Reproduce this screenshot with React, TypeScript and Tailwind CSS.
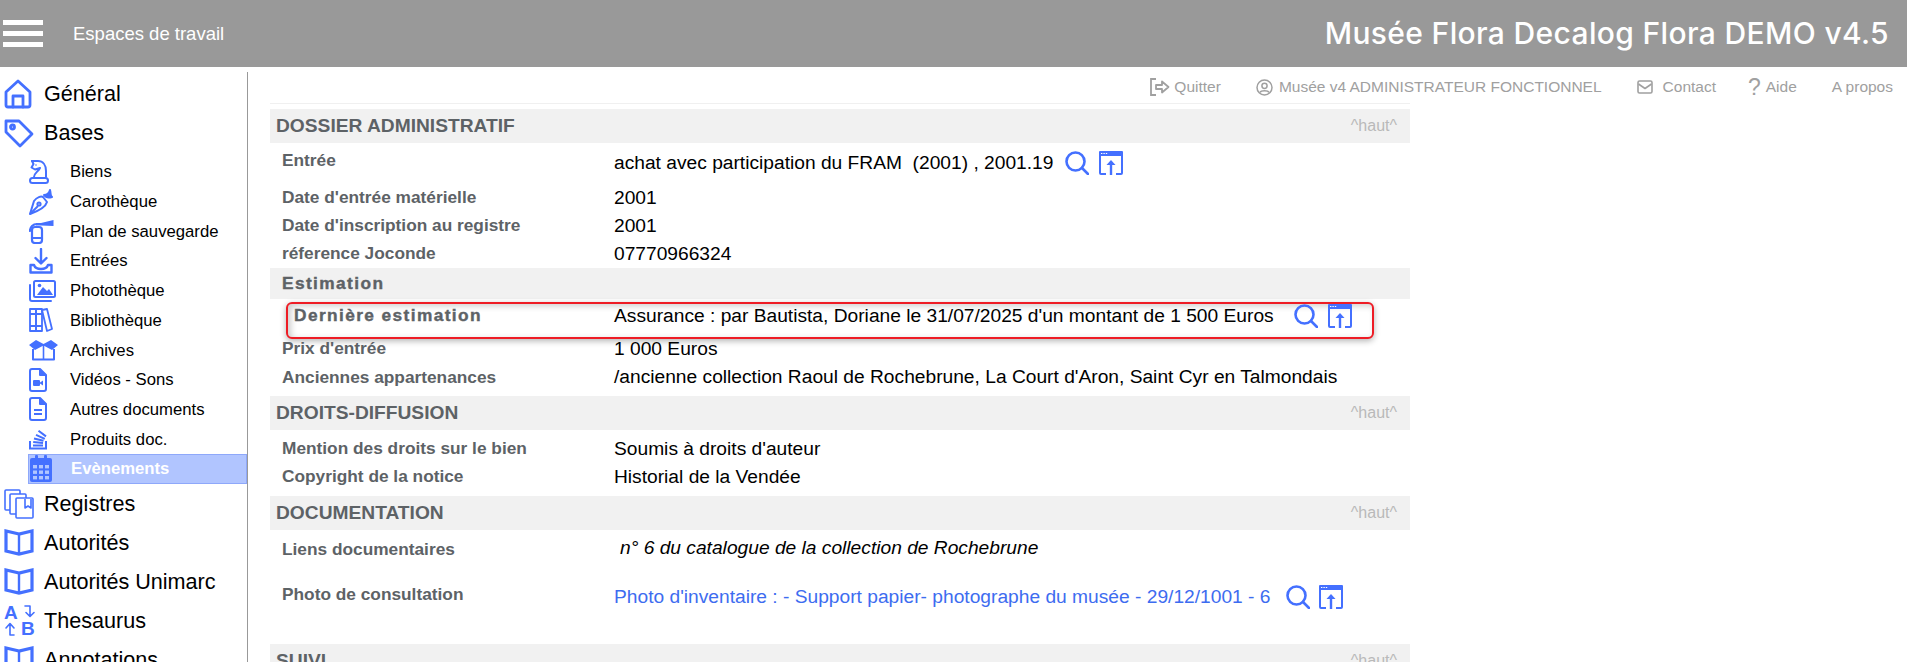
import type { ReactNode } from 'react'

const arial = 'font-["Liberation_Sans",Arial,sans-serif]'

function HomeIcon() {
  return (
    <svg width="28" height="30" viewBox="0 0 28 30" fill="none" stroke="#4470ff" strokeWidth="2.8" strokeLinejoin="round" strokeLinecap="round">
      <path d="M2 13 L14 2 L26 13 V26 a2 2 0 0 1 -2 2 H4 a2 2 0 0 1 -2 -2 Z" />
      <path d="M9 28 V17 H19 V28" />
    </svg>
  )
}

function TagIcon() {
  return (
    <svg width="30" height="30" viewBox="0 0 30 30" fill="none" stroke="#4470ff" strokeWidth="2.8" strokeLinejoin="round">
      <path d="M2 3 L15 3 L28 16 L16 28 L2 14 Z" />
      <circle cx="8.5" cy="9" r="2" />
    </svg>
  )
}

function KnightIcon() {
  return (
    <svg width="20" height="25" viewBox="0 0 20 25" fill="none" stroke="#4470ff" strokeWidth="2" strokeLinejoin="round" strokeLinecap="round">
      <path d="M3 2 H9 C14 2 17 6 17 12 V18" />
      <path d="M5 18 C5 14 9 13 11 9 L6 10.5 L2.5 8.5 L4.5 5 L3 2" />
      <rect x="1" y="19" width="18" height="5" rx="2.5" />
      <circle cx="7" cy="6" r="0.8" fill="#4470ff" stroke="none" />
    </svg>
  )
}

function PenIcon() {
  return (
    <svg width="24" height="26" viewBox="0 0 24 26" fill="none" stroke="#4470ff" strokeWidth="2" strokeLinejoin="round">
      <path d="M1 25 L5 12 C8 8 12 7 14 8 L18 13 C17 17 12 21 1 25 Z" />
      <path d="M1 25 L9 17" />
      <circle cx="10" cy="15" r="1.6" />
      <path d="M15 6 C18 6 20 4 21 1 C22 4 21 7 23 8 C20 9 17 9 15 6 Z" fill="#4470ff" />
    </svg>
  )
}

function ExtinguisherIcon() {
  return (
    <svg width="25" height="25" viewBox="0 0 25 25" fill="none" stroke="#4470ff" strokeWidth="2.2" strokeLinejoin="round" strokeLinecap="round">
      <rect x="3" y="8" width="10" height="16" rx="3" />
      <path d="M3 19 H13" />
      <path d="M1 12 C1 8 4 5 8 5" />
      <path d="M7 4 H12 L24.5 1 V7 L12 6.5 H7 Z" fill="#4470ff" stroke="none" />
    </svg>
  )
}

function InboxIcon() {
  return (
    <svg width="24" height="26" viewBox="0 0 24 26" fill="none" stroke="#4470ff" strokeWidth="2.4" strokeLinejoin="round" strokeLinecap="round">
      <path d="M12 1 V15 M6.5 10 L12 15.5 L17.5 10" />
      <path d="M5 17 H1.5 V24.5 H22.5 V17 H19 C18 20 15 21 12 21 C9 21 6 20 5 17 Z" />
    </svg>
  )
}

function ImagesIcon() {
  return (
    <svg width="27" height="22" viewBox="0 0 27 22" fill="none" stroke="#4470ff" strokeWidth="2" strokeLinejoin="round">
      <rect x="5" y="1" width="21" height="16" rx="1.5" />
      <path d="M1 5 V19 a2 2 0 0 0 2 2 H22" strokeLinecap="round" />
      <path d="M8 15 L14 7 L18 11 L20 9 L24 15 Z" fill="#4470ff" stroke="none" />
      <circle cx="10.5" cy="5.5" r="1.8" fill="#4470ff" stroke="none" />
    </svg>
  )
}

function BooksIcon() {
  return (
    <svg width="24" height="24" viewBox="0 0 24 24" fill="none" stroke="#4470ff" strokeWidth="1.8" strokeLinejoin="round">
      <rect x="1" y="1" width="6" height="22" />
      <rect x="7" y="1" width="6" height="22" />
      <path d="M1 6 H13 M1 18 H13" />
      <path d="M13 2 L18 1 L23 21 L18 23 Z" />
    </svg>
  )
}

function BoxOpenIcon() {
  return (
    <svg width="29" height="21" viewBox="0 0 29 21" fill="none" stroke="#4470ff" strokeWidth="2" strokeLinejoin="round">
      <path d="M4 9 V19.5 H25 V9" />
      <path d="M14.5 5 V19.5" strokeWidth="1.6" />
      <path d="M0 5 L7 0 L14.5 4 L22 0 L29 5 L23 10 L14.5 5.5 L6 10 Z" fill="#4470ff" stroke="none" />
    </svg>
  )
}

function FileIcon({ children }: { children: ReactNode }) {
  return (
    <svg width="18" height="24" viewBox="0 0 18 24" fill="none" stroke="#4470ff" strokeWidth="2" strokeLinejoin="round">
      <path d="M3 1 H11 L17 7 V21 a2 2 0 0 1 -2 2 H3 a2 2 0 0 1 -2 -2 V3 a2 2 0 0 1 2 -2 Z" />
      <path d="M11 1 V7 H17" fill="#4470ff" />
      {children}
    </svg>
  )
}

function StackIcon() {
  return (
    <svg width="18" height="22" viewBox="0 0 18 22" fill="none" stroke="#4470ff" strokeWidth="2">
      <path d="M1 13 V20.5 H17 V13" />
      <path d="M4 17.5 H14 M4.2 14 L14 15 M5 10.5 L14.5 12.8 M7 6.8 L15.8 10.8 M9.5 2.8 L17 8.4" />
    </svg>
  )
}

function CalendarIcon() {
  return (
    <svg width="22" height="27" viewBox="0 0 22 27" fill="#4470ff">
      <rect x="5" y="0" width="3" height="6" rx="1" />
      <rect x="14" y="0" width="3" height="6" rx="1" />
      <path d="M2 3 H20 a2 2 0 0 1 2 2 V25 a2 2 0 0 1 -2 2 H2 a2 2 0 0 1 -2 -2 V5 a2 2 0 0 1 2 -2 Z" />
      <g fill="#b1c5ff">
        <rect x="3" y="10" width="4" height="3.4" />
        <rect x="9" y="10" width="4" height="3.4" />
        <rect x="15" y="10" width="4" height="3.4" />
        <rect x="3" y="15.5" width="4" height="3.4" />
        <rect x="9" y="15.5" width="4" height="3.4" />
        <rect x="15" y="15.5" width="4" height="3.4" />
        <rect x="3" y="21" width="4" height="3.4" />
        <rect x="9" y="21" width="4" height="3.4" />
        <rect x="15" y="21" width="4" height="3.4" />
      </g>
    </svg>
  )
}

function CopiesIcon() {
  return (
    <svg width="30" height="30" viewBox="0 0 30 30" fill="none" stroke="#4470ff" strokeWidth="1.6" strokeLinejoin="round">
      <path d="M6 21 H2 a1 1 0 0 1 -1 -1 V2 a1 1 0 0 1 1 -1 H15 a1 1 0 0 1 1 1 V5" />
      <path d="M12 25 H7 a1 1 0 0 1 -1 -1 V6 a1 1 0 0 1 1 -1 H21 a1 1 0 0 1 1 1 V9" />
      <rect x="12" y="9" width="17" height="20" rx="1" fill="#fff" />
      <path d="M21 10 V19 L24 17 L27 19 V10" />
    </svg>
  )
}

function BookIcon() {
  return (
    <svg width="30" height="27" viewBox="0 0 30 27" fill="none" stroke="#4470ff" strokeWidth="3.2" strokeLinejoin="miter">
      <path d="M15 5 L2 2 V22 L15 25 L28 22 V2 Z" />
      <path d="M15 5 V25" strokeWidth="2.4" />
    </svg>
  )
}

function AzIcon() {
  return (
    <svg className="overflow-visible" width="31" height="31" viewBox="0 0 31 31" fill="none" stroke="#4470ff" strokeWidth="1.6" strokeLinejoin="round" strokeLinecap="round">
      <text x="0" y="14" fontFamily="Liberation Sans" fontWeight="700" fontSize="19" fill="#4470ff" stroke="none">A</text>
      <text x="17" y="30" fontFamily="Liberation Sans" fontWeight="700" fontSize="19" fill="#4470ff" stroke="none">B</text>
      <path d="M21 1 H26 V11 M22 7.5 L26 11.5 L30 7.5" />
      <path d="M10 30 H6 V19 M2 23 L6 18.5 L10 23" />
    </svg>
  )
}

function SearchIcon() {
  return (
    <svg width="24" height="24" viewBox="0 0 24 24" fill="none" stroke="#4470ff" strokeWidth="2.6" strokeLinecap="round">
      <circle cx="10.5" cy="10.5" r="9" />
      <path d="M17 17 L23 23" />
    </svg>
  )
}

function ExportIcon() {
  return (
    <svg width="24" height="24" viewBox="0 0 24 24" fill="none" stroke="#4470ff" strokeWidth="2">
      <path d="M0 1 a1 1 0 0 1 1 -1 H23 a1 1 0 0 1 1 1 V5 H0 Z" fill="#4470ff" stroke="none" />
      <path d="M1 4 V22 a1 1 0 0 0 1 1 H7 M23 4 V22 a1 1 0 0 1 -1 1 H17" />
      <path d="M12 24 V12" strokeWidth="2.4" />
      <path d="M7.5 14 L12 9 L16.5 14 Z" fill="#4470ff" stroke="none" />
      <rect x="2" y="2" width="1.4" height="1" fill="#fff" stroke="none" />
      <rect x="4.4" y="2" width="1.4" height="1" fill="#fff" stroke="none" />
      <rect x="6.8" y="2" width="1.4" height="1" fill="#fff" stroke="none" />
    </svg>
  )
}

function TopItem({ icon, label }: { icon: ReactNode; label: string }) {
  return (
    <div className="flex h-[39px] items-center">
      <div className="flex w-[44px] shrink-0 pl-[4px]">{icon}</div>
      <span className="text-[21.6px] text-black">{label}</span>
    </div>
  )
}

function SubItem({ icon, label, active }: { icon: ReactNode; label: string; active?: boolean }) {
  return (
    <div className={`flex h-[29.7px] items-center ${active ? 'border border-[#8ea8fa] bg-[#b1c5ff]' : ''}`}>
      <div className="flex w-[42px] shrink-0 pl-[1px]">{icon}</div>
      <span className={`text-[16.7px] ${active ? 'font-bold text-white' : 'text-black'}`}>{label}</span>
    </div>
  )
}

function Band({ title }: { title: string }) {
  return (
    <div className="flex h-[34px] items-center justify-between bg-[#f1f1f1] pl-[6px] pr-[13px]">
      <span className="text-[19.2px] font-bold text-[#5d6266]">{title}</span>
      <span className="text-[16px] text-[#b9b9b9]">^haut^</span>
    </div>
  )
}

function Row({
  label,
  height,
  labelClass = '',
  valueClass = '',
  children,
}: {
  label: string
  height: string
  labelClass?: string
  valueClass?: string
  children: ReactNode
}) {
  return (
    <div className={`flex items-center pl-[12px] ${height}`}>
      <span className={`w-[332px] shrink-0 text-[17.3px] font-bold text-[#5d6266] ${labelClass}`}>{label}</span>
      <div className={`flex items-center text-[19.2px] text-black ${valueClass}`}>{children}</div>
    </div>
  )
}

export default function App() {
  return (
    <div className={`h-[662px] overflow-hidden bg-white ${arial}`}>
      <header className="flex h-[67px] items-center justify-between bg-[#999999] pr-[18px]">
        <div className="flex items-center">
          <div className="ml-[3px] flex w-[70px] flex-col gap-[6px]">
            <div className="h-[5px] w-[40px] bg-white" />
            <div className="h-[5px] w-[40px] bg-white" />
            <div className="h-[5px] w-[40px] bg-white" />
          </div>
          <span className="text-[18.5px] text-white">Espaces de travail</span>
        </div>
        <span className="font-['Inter',sans-serif] text-[30px] font-medium tracking-[0.35px] text-white">Musée Flora Decalog Flora DEMO v4.5</span>
      </header>

      <div className="flex">
        <aside className="mt-[5px] h-[590px] w-[248px] shrink-0 border-r border-[#999999] pt-[2.5px]">
          <TopItem icon={<HomeIcon />} label="Général" />
          <TopItem icon={<TagIcon />} label="Bases" />
          <div className="ml-[28px] pt-[4.6px]">
            <SubItem icon={<KnightIcon />} label="Biens" />
            <SubItem icon={<PenIcon />} label="Carothèque" />
            <SubItem icon={<ExtinguisherIcon />} label="Plan de sauvegarde" />
            <SubItem icon={<InboxIcon />} label="Entrées" />
            <SubItem icon={<ImagesIcon />} label="Photothèque" />
            <SubItem icon={<BooksIcon />} label="Bibliothèque" />
            <SubItem icon={<BoxOpenIcon />} label="Archives" />
            <SubItem
              icon={
                <FileIcon>
                  <rect x="4" y="12" width="7" height="6" rx="1" fill="#4470ff" stroke="none" />
                  <path d="M11 14.5 L14 12.5 V17.5 L11 15.5 Z" fill="#4470ff" stroke="none" />
                </FileIcon>
              }
              label="Vidéos - Sons"
            />
            <SubItem
              icon={
                <FileIcon>
                  <path d="M5 13 H13 M5 17 H13" />
                </FileIcon>
              }
              label="Autres documents"
            />
            <SubItem icon={<StackIcon />} label="Produits doc." />
            <SubItem icon={<CalendarIcon />} label="Evènements" active />
          </div>
          <div className="pt-[0.6px]">
            <TopItem icon={<CopiesIcon />} label="Registres" />
            <TopItem icon={<BookIcon />} label="Autorités" />
            <TopItem icon={<BookIcon />} label="Autorités Unimarc" />
            <TopItem icon={<AzIcon />} label="Thesaurus" />
            <TopItem icon={<BookIcon />} label="Annotations" />
          </div>
        </aside>

        <main className="min-w-0 flex-1">
          <div className="flex h-[36px] items-center justify-end pr-[14px] pt-[4px] text-[15.5px] text-[#a0a0a0]">
            <svg width="20" height="18" viewBox="0 0 20 18" fill="none" stroke="#a0a0a0" strokeWidth="1.8">
              <path d="M6 1 H1 V17 H6" />
              <path d="M6 7 H12 V3.5 L18.5 9 L12 14.5 V11 H6 Z" strokeLinejoin="round" />
            </svg>
            <span className="ml-[4px]">Quitter</span>
            <svg className="ml-[35px]" width="17" height="17" viewBox="0 0 17 17" fill="none" stroke="#a0a0a0" strokeWidth="1.5">
              <circle cx="8.5" cy="8.5" r="7.5" />
              <circle cx="8.5" cy="6.8" r="2.6" />
              <path d="M4 13.5 C5 11 12 11 13 13.5" />
            </svg>
            <span className="ml-[6px]">Musée v4 ADMINISTRATEUR FONCTIONNEL</span>
            <svg className="ml-[35px]" width="16" height="14" viewBox="0 0 16 14" fill="none" stroke="#a0a0a0" strokeWidth="1.6" strokeLinejoin="round">
              <rect x="1" y="1" width="14" height="12" rx="1.5" />
              <path d="M1.5 4 L8 8.5 L14.5 4" />
            </svg>
            <span className="ml-[10px]">Contact</span>
            <span className="ml-[32px] text-[23px] leading-none">?</span>
            <span className="ml-[5px]">Aide</span>
            <span className="ml-[35px]">A propos</span>
          </div>

          <div className="ml-[22px] w-[1140px] border-t border-[#f0f0f0] pt-[5px]">
            <Band title="DOSSIER ADMINISTRATIF" />
            <Row label="Entrée" height="h-[41px]" labelClass="pb-[5px]">
              <span className="whitespace-pre">achat avec participation du FRAM  (2001) , 2001.19</span>
              <span className="ml-[12px]"><SearchIcon /></span>
              <span className="ml-[10px]"><ExportIcon /></span>
            </Row>
            <Row label="Date d'entrée matérielle" height="h-[28px]">2001</Row>
            <Row label="Date d'inscription au registre" height="h-[28px]">2001</Row>
            <Row label="réference Joconde" height="h-[28px]">07770966324</Row>
            <div className="flex h-[31px] items-center bg-[#f1f1f1] pl-[12px] text-[17.3px] font-bold tracking-[1.4px] text-[#5d6266] [-webkit-text-stroke:0.4px_#5d6266]">Estimation</div>
            <div className="ml-[16px] mt-[3px] flex h-[37px] w-[1088px] items-start rounded-[6px] border-2 border-[#ee1c25] bg-white pl-[6px] shadow-[0_2px_6px_rgba(0,0,0,0.3),inset_3px_2px_6px_rgba(0,0,0,0.2)]">
              <span className="w-[320px] shrink-0 text-[17.3px] font-bold leading-[22px] tracking-[1.4px] text-[#5d6266] [-webkit-text-stroke:0.4px_#5d6266]">Dernière estimation</span>
              <div className="flex items-center text-[19.2px] leading-[24px] text-black">
                Assurance : par Bautista, Doriane le 31/07/2025 d'un montant de 1 500 Euros
                <span className="ml-[20px] block"><SearchIcon /></span>
                <span className="ml-[10px] block"><ExportIcon /></span>
              </div>
            </div>
            <Row label="Prix d'entrée" height="h-[20px] mb-[4px]">1 000 Euros</Row>
            <Row label="Anciennes appartenances" height="h-[28px] mb-[5px]" labelClass="pt-[1px]" valueClass="pt-[1px]">/ancienne collection Raoul de Rochebrune, La Court d'Aron, Saint Cyr en Talmondais</Row>
            <Band title="DROITS-DIFFUSION" />
            <Row label="Mention des droits sur le bien" height="h-[38px]">Soumis à droits d'auteur</Row>
            <Row label="Copyright de la notice" height="h-[18px] mb-[10px]">Historial de la Vendée</Row>
            <Band title="DOCUMENTATION" />
            <Row label="Liens documentaires" height="h-[38px]" labelClass="pt-[2px]" valueClass="pb-[2px]">
              <span className="ml-[6px] italic">n° 6 du catalogue de la collection de Rochebrune</span>
            </Row>
            <Row label="Photo de consultation" height="h-[54px]" valueClass="pt-[5px]">
              <span className="text-[#3d6cf0]">Photo d'inventaire : - Support papier- photographe du musée - 29/12/1001 - 6</span>
              <span className="ml-[16px]"><SearchIcon /></span>
              <span className="ml-[9px]"><ExportIcon /></span>
            </Row>
            <div className="h-[22px]" />
            <Band title="SUIVI" />
          </div>
        </main>
      </div>
    </div>
  )
}
